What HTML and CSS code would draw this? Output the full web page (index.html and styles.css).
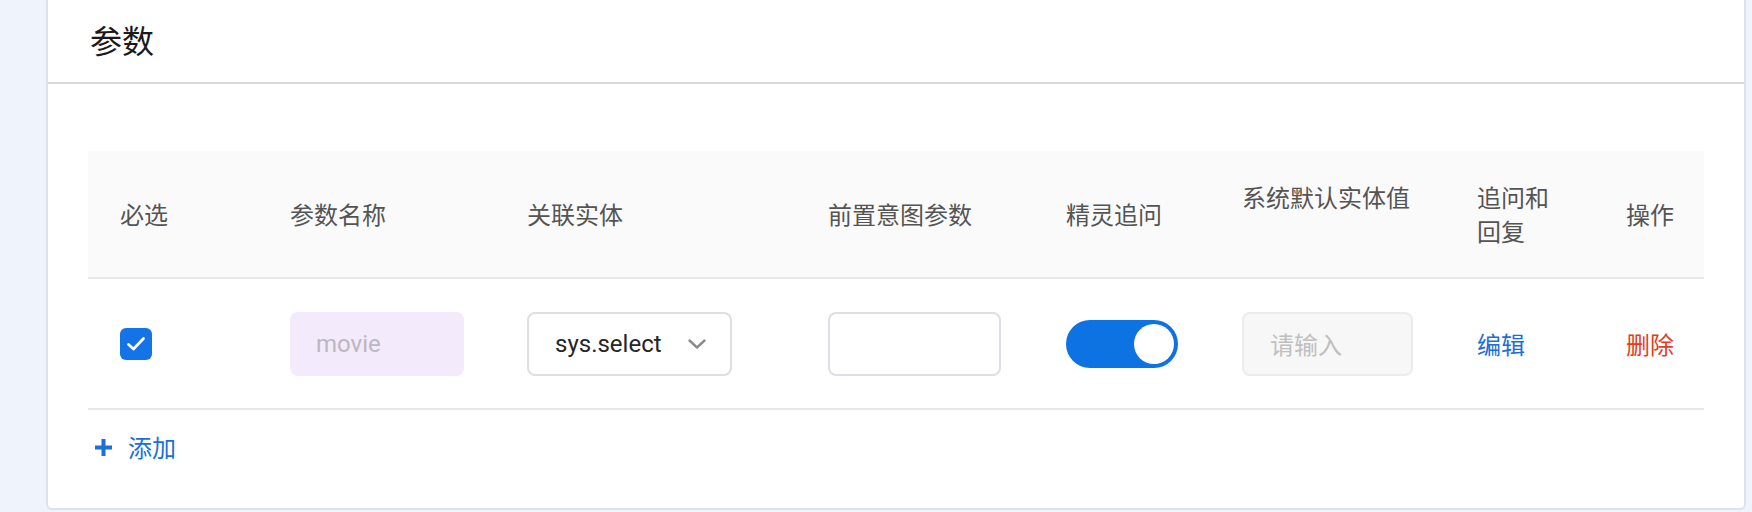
FILE: index.html
```html
<!DOCTYPE html>
<html lang="zh-CN">
<head>
<meta charset="utf-8">
<title>参数</title>
<link rel="stylesheet" href="styles.css">
</head>
<body>
<div class="page">
  <section class="card">
    <header class="card-head">
      <h2 class="card-title">参数</h2>
    </header>
    <div class="card-body">
      <div class="table">
        <div class="row thead">
          <div class="cell">必选</div>
          <div class="cell">参数名称</div>
          <div class="cell">关联实体</div>
          <div class="cell">前置意图参数</div>
          <div class="cell">精灵追问</div>
          <div class="cell cell-top">系统默认实体值</div>
          <div class="cell">追问和回复</div>
          <div class="cell">操作</div>
        </div>
        <div class="row tbody">
          <div class="cell">
            <span class="checkbox">
              <svg width="22" height="18" viewBox="0 0 22 18"><path d="M3.5 9.5 L8.5 14 L18.5 3.5" fill="none" stroke="#fff" stroke-width="2.8" stroke-linecap="round" stroke-linejoin="round"/></svg>
            </span>
          </div>
          <div class="cell"><div class="input input-tag">movie</div></div>
          <div class="cell">
            <div class="input select">
              <span>sys.select</span>
              <svg width="18" height="10" viewBox="0 0 18 10"><path d="M1.5 1.5 L9 8.5 L16.5 1.5" fill="none" stroke="#8c8c8c" stroke-width="2.4" stroke-linecap="round" stroke-linejoin="round"/></svg>
            </div>
          </div>
          <div class="cell"><div class="input input-plain"></div></div>
          <div class="cell"><span class="switch"><span class="knob"></span></span></div>
          <div class="cell"><div class="input input-disabled">请输入</div></div>
          <div class="cell"><span class="link link-blue">编辑</span></div>
          <div class="cell"><span class="link link-red">删除</span></div>
        </div>
      </div>
      <div class="add">
        <svg class="add-icon" width="19" height="19" viewBox="0 0 19 19"><path d="M9.5 1 V18 M1 9.5 H18" stroke="#1a6fd8" stroke-width="4" stroke-linecap="butt"/></svg>
        <span>添加</span>
      </div>
    </div>
  </section>
</div>
</body>
</html>
```

FILE: styles.css
```css
* {
  box-sizing: border-box;
}

html, body {
  margin: 0;
  padding: 0;
}

body {
  width: 1752px;
  height: 512px;
  overflow: hidden;
  background: #eff4fc;
  font-family: Roboto, "Noto Sans CJK SC", sans-serif;
  font-size: 24px;
  color: #262626;
}

.page {
  display: flex;
  height: 512px;
  padding: 0 6px 2px 46px;
}

.card {
  flex: 1;
  display: flex;
  flex-direction: column;
  background: #fff;
  border: 2px solid #dde2ea;
  border-top: none;
  border-radius: 0 0 6px 6px;
}

.card-head {
  height: 84px;
  border-bottom: 2px solid #d9d9d9;
  display: flex;
  align-items: center;
  padding: 0 0 4px 42px;
}

.card-title {
  margin: 0;
  font-size: 32px;
  font-weight: 400;
  color: #1a1a1a;
  font-family: "Noto Sans CJK SC", sans-serif;
}

.card-body {
  padding: 67px 40px 0 40px;
}

.table {
  display: flex;
  flex-direction: column;
}

.row {
  display: grid;
  grid-template-columns: 170px 237px 301px 238px 176px 235px 149px 110px;
  border-bottom: 2px solid #e8e8e8;
}

.thead {
  height: 128px;
  background: #fafafa;
  color: #545454;
  line-height: 34px;
}

.tbody {
  height: 131px;
}

.cell {
  display: flex;
  align-items: center;
  padding: 0 24px 0 32px;
  font-family: "Noto Sans CJK SC", sans-serif;
}

.cell-top {
  padding-bottom: 34px;
}

.checkbox {
  width: 32px;
  height: 32px;
  border-radius: 6px;
  background: #1473e6;
  display: flex;
  align-items: center;
  justify-content: center;
}

.input {
  height: 64px;
  border-radius: 8px;
  display: flex;
  align-items: center;
  padding: 0 24px 0 26px;
  font-size: 24px;
}

.input-tag {
  width: 174px;
  background: #f3eafb;
  color: #bbb7c1;
  font-family: Roboto, sans-serif;
}

.select {
  width: 205px;
  border: 2px solid #dcdfe4;
  justify-content: space-between;
  color: #262626;
  font-family: Roboto, sans-serif;
}

.input-plain {
  width: 173px;
  border: 2px solid #dcdfe4;
}

.input-disabled {
  width: 171px;
  background: #f7f7f7;
  border: 2px solid #ececec;
  color: #bfbfbf;
  font-family: "Noto Sans CJK SC", sans-serif;
}

.switch {
  width: 112px;
  height: 48px;
  border-radius: 24px;
  background: #0d72e2;
  display: flex;
  align-items: center;
  justify-content: flex-end;
  padding: 0 4px;
}

.knob {
  width: 40px;
  height: 40px;
  border-radius: 50%;
  background: #fff;
}

.link {
  font-family: "Noto Sans CJK SC", sans-serif;
}

.link-blue {
  color: #1a6fd8;
}

.link-red {
  color: #e23d21;
}

.add {
  display: flex;
  align-items: center;
  gap: 15px;
  padding: 20px 0 0 6px;
  line-height: 34px;
  color: #1a6fd8;
  font-family: "Noto Sans CJK SC", sans-serif;
}
```
